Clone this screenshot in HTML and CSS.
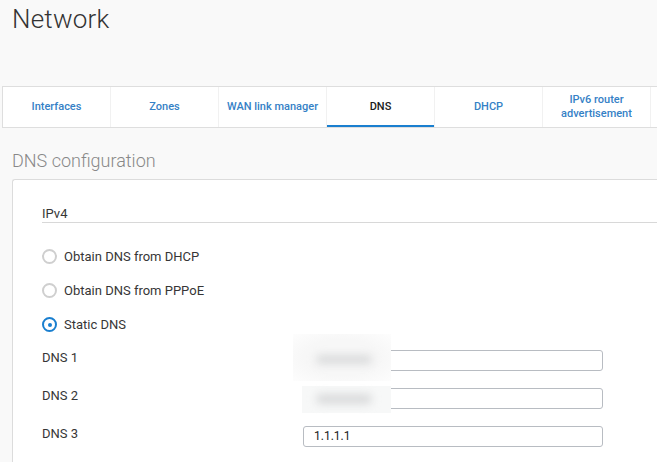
FILE: index.html
```html
<!DOCTYPE html>
<html>
<head>
<meta charset="utf-8">
<link rel="stylesheet" href="styles.css">
</head>
<body>
<div class="page">
  <h1 class="title">Network</h1>
  <nav class="tabs">
    <div class="tab">Interfaces</div>
    <div class="tab">Zones</div>
    <div class="tab">WAN link manager</div>
    <div class="tab active">DNS</div>
    <div class="tab">DHCP</div>
    <div class="tab">IPv6 router<br>advertisement</div>
    <div class="tab"></div>
  </nav>
  <h2 class="section-title">DNS configuration</h2>
  <div class="card">
    <div class="group-title">IPv4</div>
    <div class="radios">
      <label class="radio"><span class="dot"></span>Obtain DNS from DHCP</label>
      <label class="radio"><span class="dot"></span>Obtain DNS from PPPoE</label>
      <label class="radio checked"><span class="dot"></span>Static DNS</label>
    </div>
    <div class="fields">
      <div class="field">
        <span class="field-label">DNS 1</span>
        <div class="input-wrap">
          <div class="input"></div>
          <div class="blur blur-1"><span class="blob"></span></div>
        </div>
      </div>
      <div class="field">
        <span class="field-label">DNS 2</span>
        <div class="input-wrap">
          <div class="input"></div>
          <div class="blur blur-2"><span class="blob"></span></div>
        </div>
      </div>
      <div class="field">
        <span class="field-label">DNS 3</span>
        <div class="input-wrap">
          <div class="input">1.1.1.1</div>
        </div>
      </div>
    </div>
  </div>
</div>
</body>
</html>
```

FILE: styles.css
```css
* { box-sizing: border-box; }
html, body {
  margin: 0;
  padding: 0;
  background: #f9f9f9;
}
body {
  font-family: Roboto, "Liberation Sans", sans-serif;
  color: #363636;
}
.page {
  width: 657px;
  height: 462px;
  overflow: hidden;
}
.title {
  margin: 0;
  padding: 4px 0 0 12px;
  height: 86px;
  font-size: 26px;
  font-weight: 300;
  color: #333;
  letter-spacing: 0.2px;
}
.tabs {
  display: flex;
  margin-left: 2px;
  width: 760px;
  height: 42px;
  background: #fff;
  border-top: 1px solid #dedede;
  border-bottom: 1px solid #dedede;
  border-left: 1px solid #dedede;
}
.tab {
  flex: 0 0 108px;
  display: flex;
  align-items: center;
  justify-content: center;
  text-align: center;
  font-size: 11px;
  font-weight: 500;
  color: #3581c6;
  line-height: 14px;
  border-right: 1px solid #f1f1f1;
}
.tab.active {
  color: #1b1b1b;
  box-shadow: inset 0 -2px 0 #1a7fcf;
}
.section-title {
  margin: 0;
  padding: 22px 0 0 12px;
  height: 51px;
  font-size: 18px;
  font-weight: 300;
  color: #888;
}
.card {
  margin-left: 12px;
  width: 660px;
  height: 300px;
  background: #fff;
  border: 1px solid #dcdcdc;
  border-right: none;
  border-radius: 3px 0 0 3px;
  padding: 26px 0 0 29px;
}
.group-title {
  font-size: 13px;
  color: #363636;
  height: 17px;
  border-bottom: 1px solid #d8d8d8;
}
.radios {
  display: flex;
  flex-direction: column;
  gap: 19px;
  padding-top: 26px;
}
.radio {
  display: flex;
  align-items: center;
  gap: 7px;
  height: 15px;
  font-size: 13px;
  color: #363636;
}
.dot {
  width: 15px;
  height: 15px;
  border-radius: 50%;
  border: 2px solid #cfcfcf;
  background: #fff;
  position: relative;
}
.radio.checked .dot {
  border-color: #1a7fcf;
}
.radio.checked .dot::after {
  content: "";
  position: absolute;
  left: 3.5px;
  top: 3.5px;
  width: 4px;
  height: 4px;
  border-radius: 50%;
  background: #1a7fcf;
}
.fields {
  display: flex;
  flex-direction: column;
  gap: 17px;
  padding-top: 18px;
}
.field {
  display: flex;
  align-items: flex-start;
  height: 21px;
}
.field-label {
  width: 261px;
  font-size: 13px;
  line-height: 15px;
  color: #363636;
}
.input-wrap {
  position: relative;
}
.input {
  width: 300px;
  height: 21px;
  border: 1px solid #b8bcc2;
  border-radius: 3px;
  background: #fff;
  font-size: 12px;
  color: #222;
  padding: 2px 0 0 10px;
}
.blur {
  position: absolute;
  background: #f7f8f8;
}
.blur-1 {
  left: -10px;
  top: -16px;
  width: 98px;
  height: 47px;
  background: radial-gradient(ellipse at center, #f7f7f7 55%, #fdfdfd 100%);
}
.blur-2 {
  left: -1px;
  top: -2px;
  width: 89px;
  height: 27px;
}
.blob {
  position: absolute;
  border-radius: 6px;
  background: #d9dadb;
  filter: blur(4px);
}
.blur-1 .blob {
  left: 23px;
  top: 21px;
  width: 56px;
  height: 9px;
}
.blur-2 .blob {
  left: 14px;
  top: 8px;
  width: 56px;
  height: 10px;
}
```
